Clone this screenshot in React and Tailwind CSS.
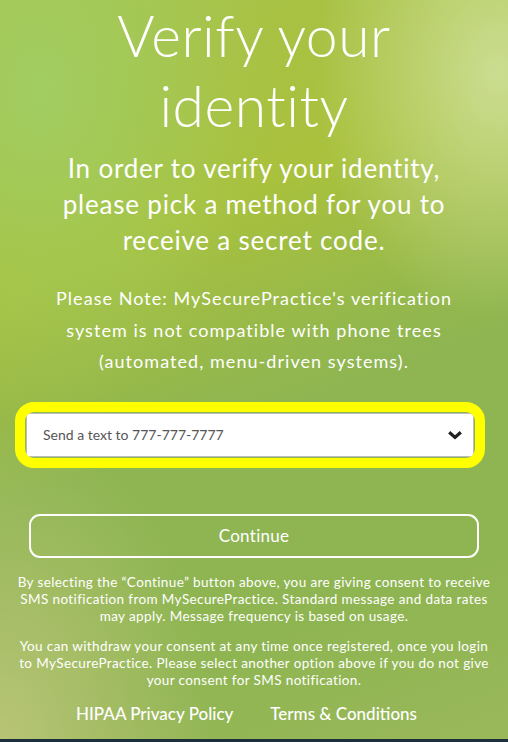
import React from 'react';

const bg =
  'bg-[radial-gradient(ellipse_at_8%_12%,rgba(160,206,100,0.9)_0%,rgba(160,206,100,0)_35%),radial-gradient(ellipse_at_98%_10%,rgba(205,222,150,0.95)_0%,rgba(205,222,150,0)_26%),radial-gradient(ellipse_at_0%_100%,rgba(184,196,118,1)_0%,rgba(184,196,118,0)_30%),linear-gradient(160deg,#a8c24a_0%,#a9c13c_30%,#8eb552_55%,#8fb552_80%,#9ab85a_100%)]';

export default function App() {
  return (
    <div className={`min-h-[742px] w-full ${bg} text-white font-['Lato','Liberation_Sans',sans-serif] flex flex-col`}>
      <div className="flex-1 flex flex-col items-center px-[10px] text-center">
        {/* Heading */}
        <h1 className="font-light text-[57px] leading-[70px] tracking-[0.5px]">
          Verify your
          <br />
          identity
        </h1>

        <p className="mt-[10px] text-[26px] leading-[36px] tracking-[0.8px]">
          In order to verify your identity,
          <br />
          please pick a method for you to
          <br />
          receive a secret code.
        </p>

        <p className="mt-[25px] text-[18px] leading-[31.5px] tracking-[1.05px]">
          Please Note: MySecurePractice's verification
          <br />
          system is not compatible with phone trees
          <br />
          (automated, menu-driven systems).
        </p>

        {/* Method picker */}
        <div className="mt-[24px] w-[470px] mr-[8px] border-[10px] border-[#ffff00] rounded-[19px] p-[1px] overflow-hidden">
          <div className="relative bg-white border border-[#bcbcbc] h-[44px] flex items-center">
            <span className="pl-[16px] text-[14px] text-[#555]">Send a text to 777-777-7777</span>
            <svg className="absolute right-[10px] top-1/2 -translate-y-1/2" width="16" height="10" viewBox="0 0 16 10">
              <path d="M2.2 2.2 L8 7.4 L13.8 2.2" fill="none" stroke="#222" strokeWidth="3.2" />
            </svg>
          </div>
        </div>

        <button className="mt-[46px] w-[450px] h-[44px] border-2 border-white rounded-[11px] text-[17px] tracking-[0.3px] text-white">
          Continue
        </button>

        {/* Consent */}
        <p className="mt-[16px] whitespace-nowrap text-[13.5px] leading-[17px] tracking-[0.38px]">
          By selecting the “Continue” button above, you are giving consent to receive
          <br />
          SMS notification from MySecurePractice. Standard message and data rates
          <br />
          may apply. Message frequency is based on usage.
        </p>
        <p className="mt-[13px] whitespace-nowrap text-[13.5px] leading-[17px] tracking-[0.38px]">
          You can withdraw your consent at any time once registered, once you login
          <br />
          to MySecurePractice. Please select another option above if you do not give
          <br />
          your consent for SMS notification.
        </p>

        <div className="mt-[13px] mr-[15px] flex gap-[37px] text-[17px] leading-[24px] font-medium">
          <a>HIPAA Privacy Policy</a>
          <a>Terms &amp; Conditions</a>
        </div>
      </div>
      <div className="h-[3px] bg-[#1c2f3c]" />
    </div>
  );
}
